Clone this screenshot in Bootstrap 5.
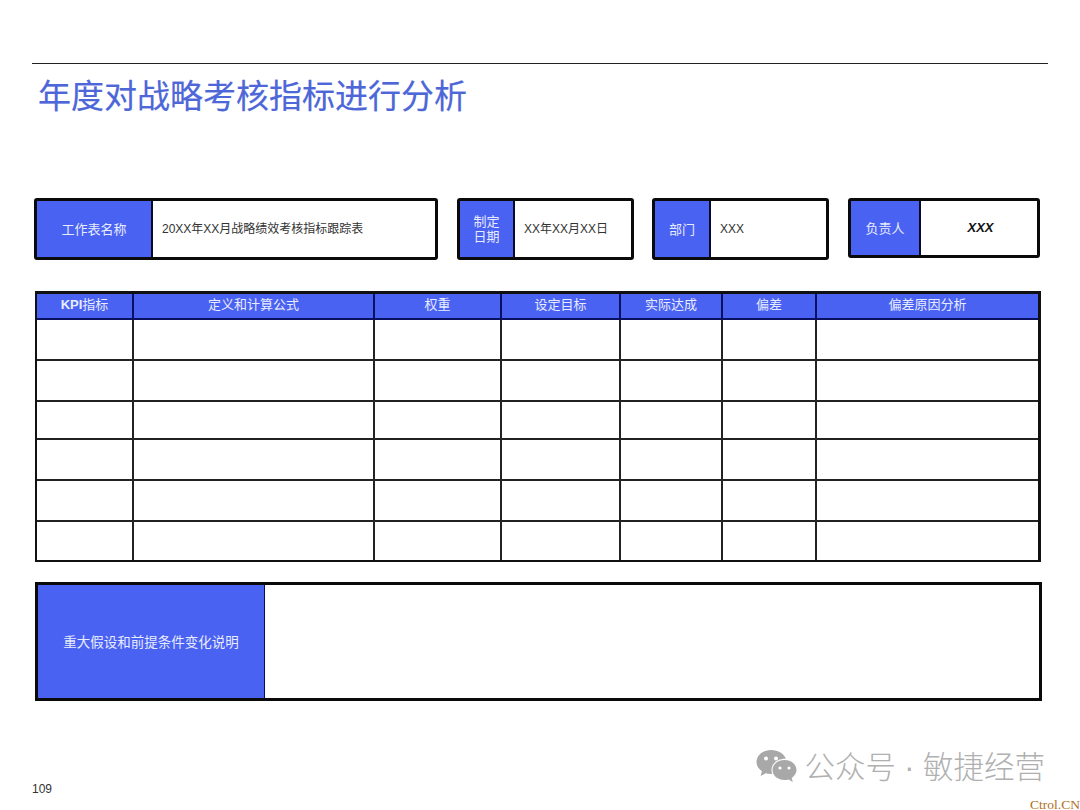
<!DOCTYPE html>
<html lang="zh">
<head>
<meta charset="utf-8">
<title>年度对战略考核指标进行分析</title>
<link rel="stylesheet" href="https://cdn.jsdelivr.net/npm/bootstrap@5.3.0/dist/css/bootstrap.min.css">
<style>
html,body{height:100%}
body{width:1080px;height:810px;overflow:hidden;background:#fff;font-family:"Liberation Sans","Noto Sans CJK SC",sans-serif;color:#222}
.slide{width:1080px;height:810px;padding:63px 32px 0 32px}
.top-rule{height:1px;background:#333;width:1016px;opacity:1;margin:0}
.slide-title{font-size:33px;line-height:44px;font-weight:400;color:#4d66d8;margin:11px 0 0 6px;letter-spacing:0;-webkit-text-stroke:.2px #4d66d8}
.info-row{margin:79px 0 0 2px;height:62px;align-items:flex-start}
.info-box{border:3px solid #0a0a0a;border-radius:3px;height:62px;background:#fff;font-size:12px}
.info-box .lab{background:#4a62f2;color:#e8ecff;border-right:2px solid #0a0a24;font-size:13px;line-height:15px;text-align:center}
.info-box .val{padding-left:9px;color:#333}
.b1{width:404px;margin-right:19px}.b1 .lab{width:116px}
.b2{width:177px;margin-right:18px}.b2 .lab{width:55px}
.b3{width:177px;margin-right:19px}.b3 .lab{width:56px}
.b4{width:192px;height:60px}.b4 .lab{width:70px}
.b4 .val{padding:0 0 0 3px;font-weight:700;font-style:italic;color:#111;font-size:13px}
.kpi-wrap{margin:31px 0 0 3px;width:1006px;height:271px;border:2px solid #111;border-top-width:3px;border-right-width:3px;border-bottom-width:2px;overflow:hidden}
.kpi{table-layout:fixed;width:100%;margin:0;border-collapse:collapse;--bs-table-bg:transparent}
.kpi th,.kpi td{padding:0;border:0;border-left:2px solid #222;border-bottom:2px solid #222;text-align:center;vertical-align:middle}
.kpi th:first-child,.kpi td:first-child{border-left:0}
.kpi tr:last-child td{border-bottom:0}
.kpi thead th{background:#4a62f2;color:#e8ecff;font-weight:400;font-size:13px;height:25px;line-height:15px;padding-bottom:4px;border-color:#0a1060}
.kpi thead th b{font-weight:700}
.r41{height:41px}.r38{height:38px}.r39{height:39px}
.note-box{margin:20px 0 0 3px;width:1007px;height:119px;border:3px solid #0a0a0a;background:#fff}
.note-lab{width:227px;background:#4a62f2;color:#e8ecff;font-size:13.500px;padding-top:3px;border-right:1px solid #0a0a60}
.foot{margin-top:40px;height:70px;position:relative}
.page-no{font-size:12px;color:#333;line-height:13px;margin-top:42px}
.mark-zh{font-size:30.500px;line-height:36px;color:#b0b0b0;font-weight:300;white-space:nowrap}
.wm{margin-right:3px;margin-top:8px}
.wm svg{width:41px;height:34px;margin-right:7px;margin-top:-3px}
.ctrol{position:absolute;right:-32px;bottom:0;font-family:"Liberation Serif",serif;font-size:13.500px;line-height:13px;color:#b0701c}
</style>
</head>
<body>
<div class="slide">
  <hr class="top-rule">
  <h1 class="slide-title">年度对战略考核指标进行分析</h1>

  <div class="info-row d-flex">
    <div class="info-box b1 d-flex"><div class="lab d-flex align-items-center justify-content-center">工作表名称</div><div class="val d-flex align-items-center">20XX年XX月战略绩效考核指标跟踪表</div></div>
    <div class="info-box b2 d-flex"><div class="lab d-flex align-items-center justify-content-center">制定<br>日期</div><div class="val d-flex align-items-center">XX年XX月XX日</div></div>
    <div class="info-box b3 d-flex"><div class="lab d-flex align-items-center justify-content-center">部门</div><div class="val d-flex align-items-center">XXX</div></div>
    <div class="info-box b4 d-flex"><div class="lab d-flex align-items-center justify-content-center">负责人</div><div class="val flex-grow-1 d-flex align-items-center justify-content-center">XXX</div></div>
  </div>

  <div class="kpi-wrap">
    <table class="table kpi">
      <colgroup><col style="width:96px"><col style="width:241px"><col style="width:127px"><col style="width:119px"><col style="width:102px"><col style="width:94px"><col></colgroup>
      <thead><tr><th><b>KPI</b>指标</th><th>定义和计算公式</th><th>权重</th><th>设定目标</th><th>实际达成</th><th>偏差</th><th>偏差原因分析</th></tr></thead>
      <tbody>
        <tr class="r41"><td></td><td></td><td></td><td></td><td></td><td></td><td></td></tr>
        <tr class="r41"><td></td><td></td><td></td><td></td><td></td><td></td><td></td></tr>
        <tr class="r38"><td></td><td></td><td></td><td></td><td></td><td></td><td></td></tr>
        <tr class="r41"><td></td><td></td><td></td><td></td><td></td><td></td><td></td></tr>
        <tr class="r41"><td></td><td></td><td></td><td></td><td></td><td></td><td></td></tr>
        <tr class="r39"><td></td><td></td><td></td><td></td><td></td><td></td><td></td></tr>
      </tbody>
    </table>
  </div>

  <div class="note-box d-flex">
    <div class="note-lab d-flex align-items-center justify-content-center">重大假设和前提条件变化说明</div>
    <div class="flex-grow-1"></div>
  </div>

  <div class="foot d-flex justify-content-between align-items-start">
    <div class="page-no">109</div>
    <div class="wm d-flex align-items-center">
      <svg viewBox="0 0 41 34" aria-hidden="true">
        <path fill="#a8a8a8" d="M15 1C7 1 .5 6.300.5 13c0 3.800 2.100 7 5.400 9.200L4.600 27l5.200-2.800c1.600.4 3.300.7 5.200.7h1.200c-.5-1.300-.7-2.500-.7-3.900 0-6.400 6-11.300 13.300-11.300h1C28.300 4.700 22.200 1 15 1z"/>
        <path fill="#a8a8a8" d="M40.500 21c0-5.700-5.500-10-12-10s-12 4.300-12 10 5.500 10 12 10c1.400 0 2.700-.2 4-.6l4.300 2.500-1.100-4c3-2 4.800-4.800 4.800-7.900z"/>
        <circle cx="10" cy="9.500" r="2" fill="#fff"/><circle cx="20" cy="9.500" r="2" fill="#fff"/>
        <circle cx="24" cy="19" r="1.600" fill="#fff"/><circle cx="33" cy="19" r="1.600" fill="#fff"/>
      </svg>
      <span class="mark-zh">公众号 · 敏捷经营</span>
    </div>
    <div class="ctrol">Ctrol.CN</div>
  </div>
</div>
</body>
</html>
